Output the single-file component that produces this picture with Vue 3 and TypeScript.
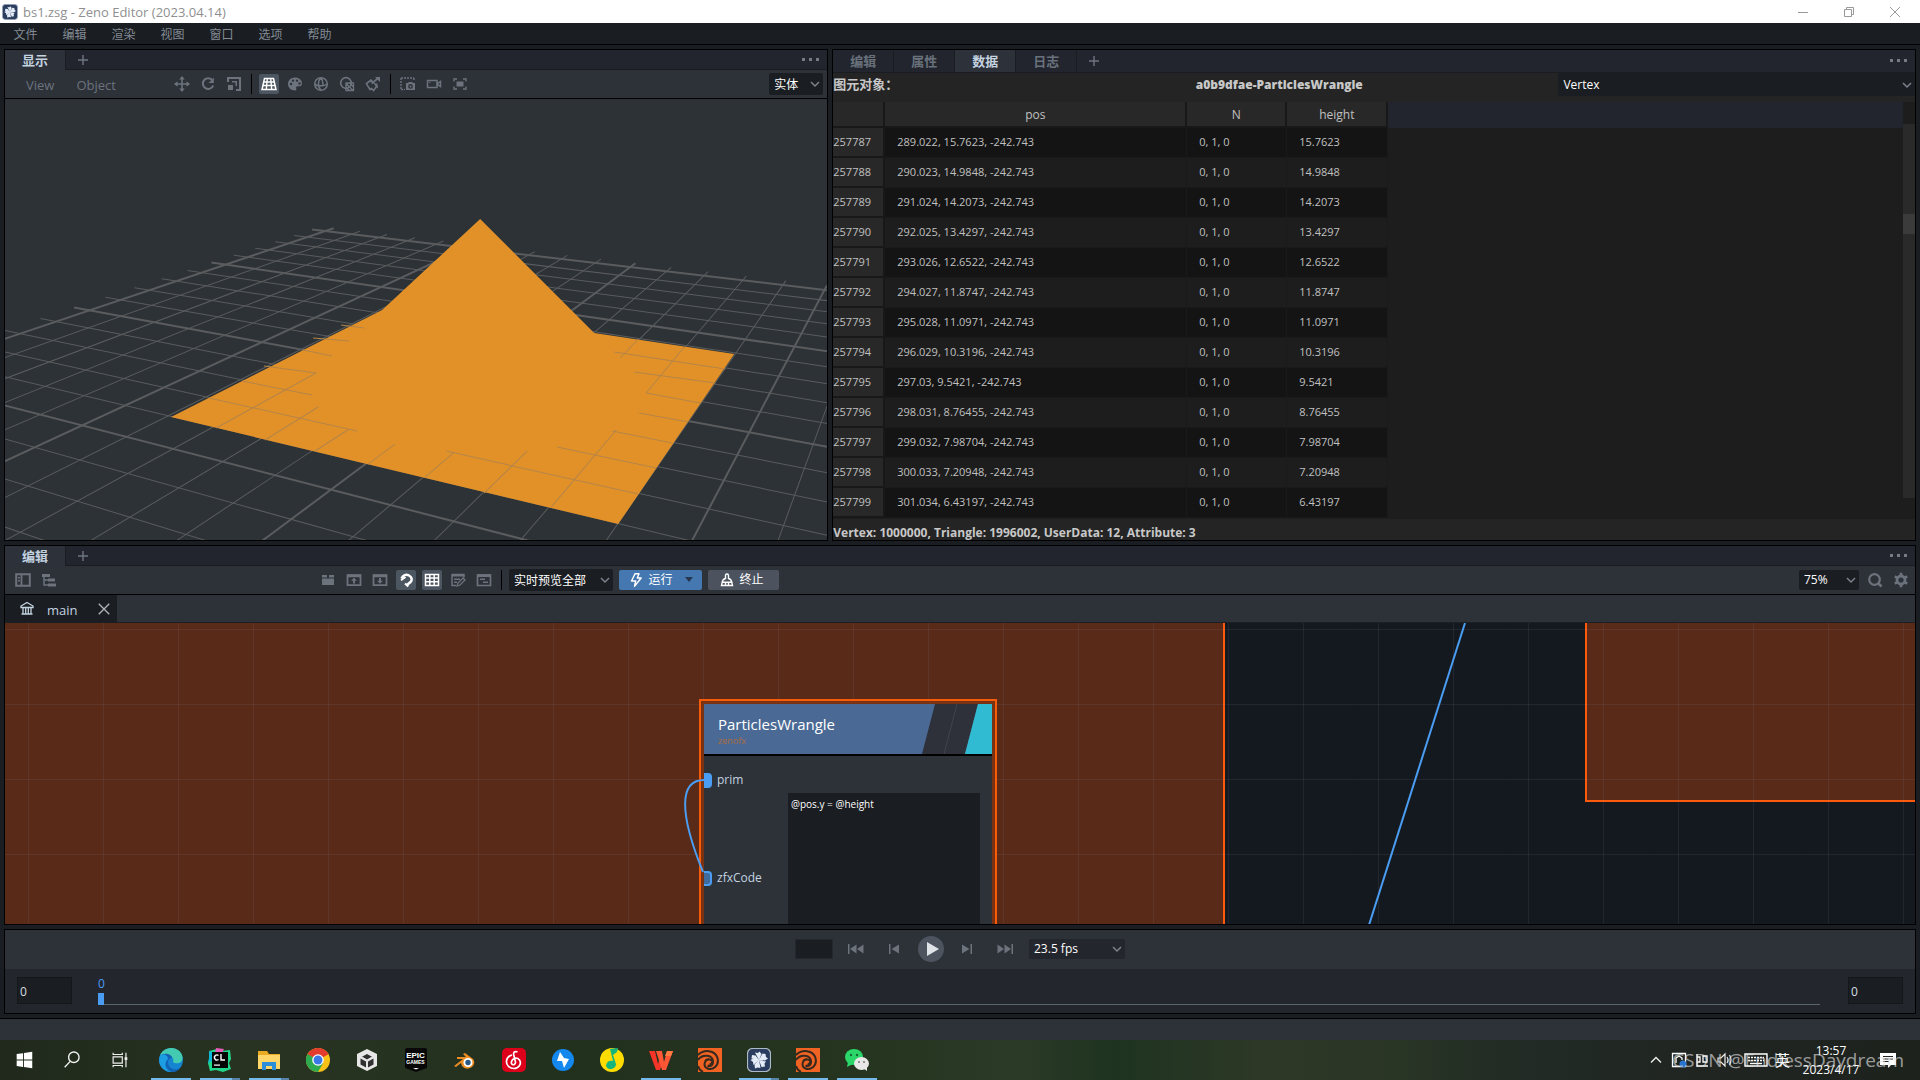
<script setup lang="ts">
import { ref } from 'vue'

interface Pt { x: number; y: number }
interface Line { a: Pt; b: Pt; major: boolean }
interface ToolIcon { name: string; label: string; active?: boolean }
interface App { name: string; icon: string; state?: 'open' | 'multi' }

const menus = ['文件', '编辑', '渲染', '视图', '窗口', '选项', '帮助']
const dataTabs = ['编辑', '属性', '数据', '日志']

const icons: Record<string, string> = {
  move: '<path d="M8 1v14M1 8h14" stroke="currentColor" stroke-width="1.6"/><path d="M8 0 5.200 3.500h5.600zM8 16l-2.800-3.500h5.600zM0 8l3.500-2.800v5.600zM16 8l-3.500-2.800v5.600z" fill="currentColor"/>',
  rotate: '<path d="M12.500 4.200A5.400 5.400 0 1 0 13.300 9.500" fill="none" stroke="currentColor" stroke-width="2"/><path d="M13.800 1.500v5.500H8.500z" fill="currentColor"/>',
  scale: '<path d="M2 6V2h12v12h-4" fill="none" stroke="currentColor" stroke-width="2"/><path d="M2 9h5v5H2zM6 5h5v5H9.500V6.500H6z" fill="currentColor"/>',
  floor: '<path d="M3.500 2.500h9l2.500 11H1z" fill="none" stroke="currentColor" stroke-width="1.5"/><path d="M2.800 6h10.500M2 9.500h12M6.300 2.500l-1 11M9.700 2.500l1 11" stroke="currentColor" stroke-width="1.4"/>',
  palette: '<path fill-rule="evenodd" fill="currentColor" d="M8 1.500C4 1.500 1 4.300 1 8s3 6.500 7 6.500c1.500 0 1.700-1 1.200-1.900-.6-1.200.2-2.400 1.500-2.400h2C14.200 10.200 15 9 15 7.500 15 4 12 1.500 8 1.500zM4 9.200a1.200 1.200 0 1 1 0-2.400 1.200 1.200 0 0 1 0 2.400zM6 5.800a1.200 1.200 0 1 1 0-2.400 1.200 1.200 0 0 1 0 2.400zm4 0a1.200 1.200 0 1 1 0-2.400 1.200 1.200 0 0 1 0 2.400zm2.500 2.900a1.200 1.200 0 1 1 0-2.400 1.200 1.200 0 0 1 0 2.400z"/>',
  globe: '<g fill="none" stroke="currentColor" stroke-width="1.6"><circle cx="8" cy="8" r="6.300"/><path d="M8 1.700C4.500 5 4.500 11 8 14.300M8 1.700c1.700 2 2 4 2 7M1.700 8c2 2.500 9.500 2.500 12.600 0"/></g>',
  shade: '<circle cx="7" cy="7" r="5.300" fill="none" stroke="currentColor" stroke-width="1.700"/><path d="M7 7h7.500v7.500H7zM7.500 8l6.500 6.500M10.500 7l4 4M7 11l3.500 3.500" fill="none" stroke="currentColor" stroke-width="1.300"/>',
  light: '<path d="M1.500 7.500 6 4l6 6-3.500 4.500-2-2-1.500 1-1.500-2.500-1-1.300zM6.500 7.500 13.500 2" fill="none" stroke="currentColor" stroke-width="1.600"/><path d="M10 1h5v5zM12 6.500l1 6-3-2.500z" fill="currentColor"/>',
  snapshot: '<path d="M1 2h13M1 2v12M1 13.500h4M14 2v3" fill="none" stroke="currentColor" stroke-width="1.400" stroke-dasharray="2 1"/><path fill-rule="evenodd" fill="currentColor" d="M6 7h2l1-1h3l1 1h2v7H6zm4.500 1a2.400 2.400 0 1 0 0 4.800 2.400 2.400 0 0 0 0-4.800z"/><circle cx="10.500" cy="10.400" r="1" fill="currentColor"/>',
  video: '<path d="M1.500 4.500h9.500v7H1.500zM11 8l3.500-2.500v5z" fill="none" stroke="currentColor" stroke-width="1.500"/><path d="M3 6.300h1.500" stroke="currentColor"/>',
  focus: '<path d="M2 5.500V3h3M11 3h3v2.500M14 10.500V13h-3M5 13H2v-2.500" fill="none" stroke="currentColor" stroke-width="1.400"/><path d="M4.500 5.500h7v5h-7z" fill="currentColor"/>',
  sidebar: '<path d="M1.200 2.200h13.600v11.600H1.200z" fill="none" stroke="currentColor" stroke-width="2"/><path d="M6.500 2v12" stroke="currentColor" stroke-width="1.800"/><path d="M3 5h2v1.500H3zM3 8h2v1.500H3z" fill="currentColor"/>',
  tree: '<path d="M1 2h8v3H1zM7 6.500h7v3H7zM7 11.500h8v3H7z" fill="currentColor"/><path d="M3 5v8h4M3 8h4" fill="none" stroke="currentColor" stroke-width="1.500"/>',
  folder: '<path d="M2 3h5v2.500H2zM9 3h5v2.500H9zM2 6.500h12V13H2z" fill="currentColor"/>',
  up: '<path d="M1.500 3.200h13v10h-13z" fill="none" stroke="currentColor" stroke-width="1.800"/><path d="M1 2.500h14v2.700H1zM8 5.800l3 3H9V11.500H7V8.800H5z" fill="currentColor"/>',
  down: '<path d="M1.500 3.200h13v10h-13z" fill="none" stroke="currentColor" stroke-width="1.800"/><path d="M1 2.500h14v2.700H1zM8 11.800l3-3H9V6H7v2.800H5z" fill="currentColor"/>',
  magnet: '<path d="M3.500 6.500C5 3 8 1.800 11 3.500s3.500 4.500 1.500 6.500L9 13" fill="none" stroke="currentColor" stroke-width="2.500"/><path d="M3 8.200 7.500 5M7 11.500l3.300 3" stroke="currentColor" stroke-width="2"/>',
  grid: '<path d="M1.500 2.500h13v11h-13zM1.500 6h13M1.500 9.700h13M5.800 2.500v11M10.200 2.500v11" fill="none" stroke="currentColor" stroke-width="1.500"/>',
  note: '<path d="M6 13.500H2v-11h12v3" fill="none" stroke="currentColor" stroke-width="1.500"/><path d="M2 2h12v2.500H2zM4 6.500h6V8H4zM4 9.500h3V11H4z" fill="currentColor"/><path d="m7 14 1-3 5-5 2 2-5 5z" fill="none" stroke="currentColor" stroke-width="1.300"/>',
  panel: '<path d="M1.500 3h13v10.500h-13z" fill="none" stroke="currentColor" stroke-width="1.700"/><path d="M1 2.300h14V5H1zM4 6.500h5V8H4zM7 9.500h5V11H7z" fill="currentColor"/>',
  bolt: '<path d="M7 1.800h4L9.300 6h3.900L6.500 14.200 7.700 9H3.500z" fill="none" stroke="currentColor" stroke-width="1.400" stroke-linejoin="round"/>',
  broom: '<path d="M6.500 6.500V3.500a1.500 1.500 0 0 1 3 0v3c2 .6 3 2 3.200 3.500l.8 3.500h-11l.8-3.500C3.500 8.500 4.500 7.100 6.500 6.500zM3.500 10.200h9M6.500 11v2.500M9.500 11v2.500" fill="none" stroke="currentColor" stroke-width="1.400"/>',
  search: '<circle cx="7.500" cy="7.500" r="5.300" fill="none" stroke="currentColor" stroke-width="2.200"/><path d="m11 11 3.500 3.500" stroke="currentColor" stroke-width="2.500"/>',
  gear: '<circle cx="8" cy="8" r="4" fill="none" stroke="currentColor" stroke-width="2.800"/><path d="M8 .8v3M8 12.200v3M1.800 4.400l2.500 1.500M11.700 10.100l2.500 1.500M1.800 11.600l2.500-1.500M11.700 5.900l2.500-1.500" stroke="currentColor" stroke-width="2.800"/>',
  bank: '<path d="m8 1.500 6 3.500v1.500H2V5zM2.500 13h11M4 6.500V13M6.700 6.500V13M9.300 6.500V13M12 6.500V13" fill="none" stroke="currentColor" stroke-width="1.300"/>',
  close: '<path d="m1 1 14 14M15 1 1 15" stroke="currentColor" stroke-width="1.800"/>',
  plus: '<path d="M8 3v10M3 8h10" stroke="currentColor" stroke-width="1.400"/>',
  chevron: '<path d="m4 6 4 4 4-4" fill="none" stroke="#7b828c" stroke-width="1.500"/>',
  dots: '<path d="M0 6h3v3H0zM7 6h3v3H7zM14 6h3v3h-3z" fill="currentColor"/>',
  first: '<path d="M0 3h1.500v10H0zM8.500 3.500v9L2 8zM15.500 3.500v9L9 8z" fill="currentColor"/>',
  prev: '<path d="M3 3h1.500v10H3zM13 3.500v9L5.500 8z" fill="currentColor"/>',
  next: '<path d="M11.500 3H13v10h-1.500zM3 3.500v9L10.500 8z" fill="currentColor"/>',
  last: '<path d="M14.500 3H16v10h-1.500zM7.500 3.500v9L14 8zM.5 3.500v9L7 8z" fill="currentColor"/>',
  zeno: '<rect x=".5" y=".5" width="23" height="23" rx="5" fill="#2b3d5e" stroke="#aeb9c8" stroke-width="1.200"/><g fill="#e3ebf6"><path d="M12 12 8 4.500l3 .5 1.500-1.500 2 2.500zM12 12l3.500-6.500 3 .5.500 3 2 1.500-3 2zM12 12l7 1.500-1.500 2 .5 3-3.500.500zM12 12l1.500 8-3-.5-2.500 1-.5-4zM12 12l-5.500 5-.5-3-2.500-2 3-1.500zM12 12 4.500 10.500 5 7l3.500.5z"/></g>',
  win: '<path fill="#fff" d="M4 5.500 11 4.500v7H4zM12 4.300 21 3v8.500h-9zM4 12.500h7v7l-7-1zM12 12.500h9V21l-9-1.300z"/>',
  find: '<g fill="none" stroke="#f2f2f2" stroke-width="1.500"><circle cx="14" cy="9" r="5.700"/><path d="m10 13.500-6 6.500"/></g>',
  tasks: '<g fill="none" stroke="#eee" stroke-width="1.300"><path d="M4.500 8.500h10v7h-10zM4.500 4v2h10V4M4.500 20v-2h10v2M18.500 4v16"/></g><path d="M17 9h3v3h-3z" fill="#eee"/>',
  edge: '<circle cx="12" cy="12" r="12" fill="#1685d1"/><path d="M1 8C4-2 19-3 23 7c2 6-2 9-7 8-3-.5-2-2-1.500-3C14 7 5 4 1 8z" fill="#42cbb0"/><path d="M1 8C5 4 13 6 13 10c-5 0-6 8 1 11 2 1 6 0 8-2-4 7-15 7-19 0C0 15 0 11 1 8z" fill="#1263b4"/><path d="M9 11c-5 5-2 11 4 13C3 24-2 15 1 8c3-3 8-1 8 3z" fill="#1d9de2"/>',
  clion: '<path d="m1 3 8-2 5 2 8-1 1 9-2 4 2 6-8 3-7-2-6 1-2-8 2-6z" fill="#21d789"/><path d="m1 3 6 2-3 8-4 2 1-5z" fill="#0bbad6"/><path d="m8 0 8 1-2 4H7z" fill="#e95bb9"/><path d="M4 4h16v16H4z" fill="#050505"/><path d="M10.500 7.500A2.500 2.500 0 1 0 10.500 11.500M13 6v6h4" fill="none" stroke="#fff" stroke-width="1.400"/><path d="M6 16.500h6v1.200H6z" fill="#fff"/>',
  files: '<path d="M1 3h9l2 3h11v15H1z" fill="#e9ac22"/><path d="M1 7h22v14H1z" fill="#ffd667"/><path d="M5 14h14v8h-4v-4H9v4H5z" fill="#2c8ed8"/>',
  chrome: '<circle cx="12" cy="12" r="12" fill="#fbc116"/><path d="M12 12 1.600 6a12 12 0 0 1 20.800 0z" fill="#e33b2e"/><path d="M12 12 1.600 6A12 12 0 0 0 12 24l5.200-9z" fill="#2da94f"/><path d="M1.600 6h20.800L12 12z" fill="#e33b2e"/><circle cx="12" cy="12" r="5.800" fill="#fff"/><circle cx="12" cy="12" r="4.500" fill="#3b78e7"/>',
  unity: '<path d="m12 1 10 5v12l-10 5-10-5V6z" fill="#e7e7e7"/><path d="m12 6 5 2.800-5 2.900-5-2.900zM5.500 10.500l5.500 3v6l-5.500-3zM18.500 10.500l-5.500 3v6l5.500-3z" fill="#303030"/><path d="m12 12 0 7M12 12 6 8.500M12 12l6-3.500" stroke="#ddd"/>',
  epic: '<path d="M1 2q0-2 2-2h18q2 0 2 2v18l-11 4-11-4z" fill="#080808"/><path d="m9 20 3 1.500 3-1.500z" fill="#eee"/>',
  blender: '<path d="m1 18 9-7H4V9h9l-3-3 2-1 8 6q3 4-1 8-6 4-10-1l-1-3-5 4z" fill="#ed8d24"/><circle cx="15" cy="14.500" r="4.500" fill="#fff"/><circle cx="15" cy="14.500" r="2.700" fill="#265787"/>',
  netease: '<rect width="24" height="24" rx="5" fill="#dd001b"/><path d="M15.500 4C12 2.500 11 5 12 8l1.500 6c0 4-5 3.500-4-.5C10.500 10 15 9 17.500 12c2.500 4-1 8.500-5.500 8.500S4 17 4.500 13 8 7.500 10 7" fill="none" stroke="#fff" stroke-width="1.700"/>',
  thunder: '<circle cx="12" cy="12" r="11" fill="#1488ee"/><path d="M9 4 6 13l5 0 2 7 5-9-5-1z" fill="#fff"/>',
  music: '<circle cx="12" cy="12" r="12" fill="#ffdc00"/><path d="M10 1l8-1-1 4-4 3 3 9c0 6-10 7-10 1 1-4 4-5 7-4z" fill="#16b57b"/>',
  wps: '<path d="M0 3h6l3 13 2-7 3 5-3 8H7z" fill="#f43527"/><path d="M7 3h6l2 11 3-11h6l-7 19h-4z" fill="#ff5636"/><path d="m16 8 2-5h6l-2 5z" fill="#ff7b42"/>',
  houdini: '<path d="M0 0h24v24H0z" fill="#f16322"/><path d="M0 7c6-6 17-5 19.500 3 2 8-5 12.500-10 10.500s-3-10 2-9 2 5 0 5M0 12c3-5 12-6 14.500-1 2 6-2 8-5 6.500M0 18q1 4 5 6" fill="none" stroke="#36291e" stroke-width="2"/>',
  wechat: '<ellipse cx="9" cy="9" rx="9" ry="8" fill="#2bd769"/><path d="m3 14-1 5 6-3z" fill="#2bd769"/><ellipse cx="16.500" cy="15.500" rx="7.500" ry="6.500" fill="#e8e8e8"/><path d="m18 20 4 3v-5z" fill="#e8e8e8"/><g fill="#146b35"><circle cx="6" cy="7" r="1.200"/><circle cx="12" cy="7" r="1.200"/></g><g fill="#777"><circle cx="14" cy="14" r="1"/><circle cx="19" cy="14" r="1"/></g>',
}

const transformTools: ToolIcon[] = [
  { name: 'move', label: '移动' }, { name: 'rotate', label: '旋转' }, { name: 'scale', label: '缩放' },
]
const shadingTools: ToolIcon[] = [
  { name: 'floor', label: '网格', active: true }, { name: 'palette', label: '材质' }, { name: 'globe', label: '线框' },
  { name: 'shade', label: '平滑' }, { name: 'light', label: '灯光' },
]
const cameraTools: ToolIcon[] = [
  { name: 'snapshot', label: '截图' }, { name: 'video', label: '录像' }, { name: 'focus', label: '聚焦' },
]
const graphTools: ToolIcon[] = [
  { name: 'folder', label: '打开' }, { name: 'up', label: '上级' }, { name: 'down', label: '下级' },
  { name: 'magnet', label: '吸附', active: true }, { name: 'grid', label: '网格', active: true },
  { name: 'note', label: '注释' }, { name: 'panel', label: '面板' },
]

const rows: [number, string, string][] = [
  [257787, '289.022', '15.7623'],
  [257788, '290.023', '14.9848'],
  [257789, '291.024', '14.2073'],
  [257790, '292.025', '13.4297'],
  [257791, '293.026', '12.6522'],
  [257792, '294.027', '11.8747'],
  [257793, '295.028', '11.0971'],
  [257794, '296.029', '10.3196'],
  [257795, '297.03', '9.5421'],
  [257796, '298.031', '8.76455'],
  [257797, '299.032', '7.98704'],
  [257798, '300.033', '7.20948'],
  [257799, '301.034', '6.43197'],
]

const apps: App[] = [
  { name: 'Edge', icon: 'edge', state: 'open' },
  { name: 'CLion', icon: 'clion', state: 'multi' },
  { name: 'Explorer', icon: 'files', state: 'multi' },
  { name: 'Chrome', icon: 'chrome' },
  { name: 'Unity', icon: 'unity' },
  { name: 'Epic Games', icon: 'epic' },
  { name: 'Blender', icon: 'blender' },
  { name: 'NetEase Music', icon: 'netease' },
  { name: 'Thunder', icon: 'thunder' },
  { name: 'QQ Music', icon: 'music' },
  { name: 'WPS', icon: 'wps', state: 'open' },
  { name: 'Houdini', icon: 'houdini' },
  { name: 'Zeno', icon: 'zeno', state: 'multi' },
  { name: 'Houdini', icon: 'houdini', state: 'open' },
  { name: 'WeChat', icon: 'wechat', state: 'open' },
]

// Perspective mapping of the ground plane into viewport coordinates.
const G = -0.2144
const H = -0.2676
function project(u: number, v: number): Pt {
  const s = u / 15
  const t = v / 10
  const w = 1 + G * s + H * t
  return {
    x: (609.2 * s - 490.2 * t + 614) / w / 1.8892 - 5,
    y: (53.6 * s + 67.8 * t + 396.5) / w / 3,
  }
}

const floor: Line[] = []
for (let i = 0; i <= 28; i++) {
  const vMax = ((0.94 + G * (i / 15)) / -H) * 10
  const uMax = ((0.94 + H * (i / 10)) / -G) * 15
  if (i <= 20) floor.push({ a: project(i, -0.5), b: project(i, vMax), major: i % 5 === 0 })
  floor.push({ a: project(-0.5, i), b: project(Math.min(uMax, 24), i), major: i % 5 === 0 })
}

// Pieces of the floor grid that show above the surface near its rim.
const rim: [number, number, number, number][] = [
  [341, 325, 364, 328], [313, 338, 349, 341], [303, 350, 332, 356], [264, 366, 316, 373], [316, 373, 216, 428],
  [242, 381, 312, 395], [209, 398, 357, 431], [318, 407, 265, 440], [349, 429, 315, 451], [395, 444, 368, 464],
  [454, 452, 425, 477], [446, 451, 638, 494], [527, 451, 484, 493], [616, 430, 551, 507], [612, 431, 672, 443],
  [557, 447, 656, 468], [639, 413, 688, 422], [646, 393, 700, 403], [646, 393, 684, 347], [634, 372, 715, 383],
  [614, 352, 725, 369], [620, 358, 638, 339],
]

const display = ref('实体')
const element = ref('Vertex')
const preview = ref('实时预览全部')
const zoomLevel = ref('75%')
const fps = ref('23.5 fps')
const frame = ref(0)
const startFrame = ref('0')
const endFrame = ref('0')
const currentFrame = ref('')
const code = ref('@pos.y = @height')
</script>

<template>
  <div class="app">
    <header class="titlebar">
      <svg class="logo" viewBox="0 0 24 24" v-html="icons.zeno" />
      <span>bs1.zsg - Zeno Editor (2023.04.14)</span>
      <div class="winbtns">
        <button aria-label="Minimize"><svg viewBox="0 0 12 12"><path d="M1 6.500h10" stroke="#999" /></svg></button>
        <button aria-label="Restore"><svg viewBox="0 0 12 12"><path d="M1.500 3.500h7v7h-7zM3.500 3.500v-2h7v7h-2" fill="none" stroke="#999" /></svg></button>
        <button aria-label="Close"><svg viewBox="0 0 12 12"><path d="m1 1 10 10M11 1 1 11" stroke="#999" /></svg></button>
      </div>
    </header>
    <nav class="menubar">
      <button v-for="m in menus" :key="m">{{ m }}</button>
    </nav>

    <main class="workspace">
      <div class="upper">
        <section class="panel view3d">
          <div class="tabs">
            <button class="tab on wide">显示</button>
            <button class="add" aria-label="添加"><svg class="ic" viewBox="0 0 16 16" v-html="icons.plus" /></button>
            <button class="more" aria-label="更多"><svg viewBox="0 0 17 16" v-html="icons.dots" /></button>
          </div>
          <div class="toolbar">
            <div class="words"><button>View</button><button>Object</button></div>
            <div class="tools">
              <button v-for="t in transformTools" :key="t.name" class="tool" :aria-label="t.label"><svg class="ic" viewBox="0 0 16 16" v-html="icons[t.name]" /></button>
              <i class="sep" />
              <button v-for="t in shadingTools" :key="t.name" class="tool" :class="{ active: t.active }" :aria-label="t.label"><svg class="ic" viewBox="0 0 16 16" v-html="icons[t.name]" /></button>
              <i class="sep" />
              <button v-for="t in cameraTools" :key="t.name" class="tool" :aria-label="t.label"><svg class="ic" viewBox="0 0 16 16" v-html="icons[t.name]" /></button>
            </div>
            <label class="combo mode"><select v-model="display" aria-label="显示模式"><option>实体</option></select><svg viewBox="0 0 16 16" v-html="icons.chevron" /></label>
          </div>
          <div class="viewport">
            <svg viewBox="0 0 822 441" preserveAspectRatio="xMidYMid slice">
              <line v-for="(l, i) in floor" :key="i" :x1="l.a.x" :y1="l.a.y" :x2="l.b.x" :y2="l.b.y" stroke="#5a5c5e" :stroke-width="l.major ? 2 : 1" />
              <path d="M166 318 377 211 475 120 589 234 729 255 613 425z" fill="#e29128" />
              <line v-for="(r, i) in rim" :key="'r' + i" :x1="r[0]" :y1="r[1]" :x2="r[2]" :y2="r[3]" stroke="#b58548" stroke-width="1" transform="translate(-5 -99)" />
            </svg>
          </div>
        </section>

        <section class="panel data">
          <div class="tabs tall">
            <button v-for="t in dataTabs" :key="t" class="tab" :class="{ on: t === '数据' }">{{ t }}</button>
            <button class="add" aria-label="添加"><svg class="ic" viewBox="0 0 16 16" v-html="icons.plus" /></button>
            <button class="more" aria-label="更多"><svg viewBox="0 0 17 16" v-html="icons.dots" /></button>
          </div>
          <div class="object">
            <label for="element">图元对象：</label>
            <strong>a0b9dfae-ParticlesWrangle</strong>
            <div class="combo vertex"><select id="element" v-model="element"><option>Vertex</option></select><svg viewBox="0 0 16 16" v-html="icons.chevron" /></div>
          </div>
          <div class="sheet">
            <table>
              <colgroup><col class="c0"><col class="c1"><col class="c2"><col class="c3"><col></colgroup>
              <thead><tr><th /><th>pos</th><th>N</th><th>height</th><th class="rest" /></tr></thead>
              <tbody>
                <tr v-for="r in rows" :key="r[0]">
                  <th scope="row">{{ r[0] }}</th>
                  <td>{{ r[1] }}, {{ r[2] }}, -242.743</td>
                  <td>0, 1, 0</td>
                  <td>{{ r[2] }}</td>
                  <td class="rest" />
                </tr>
              </tbody>
            </table>
            <div class="scroll"><i /></div>
          </div>
          <div class="counts">Vertex: 1000000, Triangle: 1996002, UserData: 12, Attribute: 3</div>
        </section>
      </div>

      <section class="panel graph">
        <div class="tabs">
          <button class="tab on wide">编辑</button>
          <button class="add" aria-label="添加"><svg class="ic" viewBox="0 0 16 16" v-html="icons.plus" /></button>
          <button class="more" aria-label="更多"><svg viewBox="0 0 17 16" v-html="icons.dots" /></button>
        </div>
        <div class="toolbar">
          <div class="lefttools">
            <button class="tool" aria-label="侧栏"><svg class="ic" viewBox="0 0 16 16" v-html="icons.sidebar" /></button>
            <button class="tool" aria-label="子图"><svg class="ic" viewBox="0 0 16 16" v-html="icons.tree" /></button>
          </div>
          <div class="tools">
            <button v-for="t in graphTools" :key="t.name" class="tool" :class="{ active: t.active }" :aria-label="t.label"><svg class="ic" viewBox="0 0 16 16" v-html="icons[t.name]" /></button>
            <i class="sep" />
          </div>
          <label class="combo preview"><select v-model="preview" aria-label="预览"><option>实时预览全部</option></select><svg viewBox="0 0 16 16" v-html="icons.chevron" /></label>
          <button class="run"><svg class="ic" viewBox="0 0 16 16" v-html="icons.bolt" />运行<svg class="tri" viewBox="0 0 8 6"><path d="M0 0h8L4 5z" fill="#26384f" /></svg></button>
          <button class="stop"><svg class="ic" viewBox="0 0 16 16" v-html="icons.broom" />终止</button>
          <div class="righttools">
            <label class="combo zoom"><select v-model="zoomLevel" aria-label="缩放"><option>75%</option></select><svg viewBox="0 0 16 16" v-html="icons.chevron" /></label>
            <button class="tool" aria-label="搜索"><svg class="ic" viewBox="0 0 16 16" v-html="icons.search" /></button>
            <button class="tool" aria-label="设置"><svg class="ic" viewBox="0 0 16 16" v-html="icons.gear" /></button>
          </div>
        </div>
        <div class="files">
          <div class="file">
            <svg class="ic" viewBox="0 0 16 16" v-html="icons.bank" /><span>main</span>
            <button aria-label="关闭"><svg viewBox="0 0 16 16" v-html="icons.close" /></button>
          </div>
        </div>
        <div class="canvas">
          <div class="group first" />
          <div class="group second" />
          <div class="gridlines" />
          <svg class="wires"><path d="M1460 0 1364 302" fill="none" stroke="#4a9df2" stroke-width="2" /></svg>
          <div class="node">
            <div class="head">
              <svg viewBox="0 0 70 50"><path d="M13 0h43L43 50H0z" fill="#2e313a" /><path d="M35 0 22 50" stroke="#41444c" /><path d="M56 0h14v50H43z" fill="#31bbd3" /></svg>
              <b>ParticlesWrangle</b><small>zenofx</small>
            </div>
            <div class="port prim"><i />prim</div>
            <div class="port zfx"><i /><label for="zfx">zfxCode</label></div>
            <textarea id="zfx" v-model="code" spellcheck="false" />
          </div>
          <svg class="wires"><path d="M699 157C674 157 674 190 698 249" fill="none" stroke="#4a9df2" stroke-width="2" /></svg>
        </div>
      </section>

      <section class="panel timeline">
        <div class="player">
          <input v-model="currentFrame" class="cur" aria-label="当前帧">
          <button class="step" aria-label="首帧"><svg class="ic" viewBox="0 0 16 16" v-html="icons.first" /></button>
          <button class="step" aria-label="上一帧"><svg class="ic" viewBox="0 0 16 16" v-html="icons.prev" /></button>
          <button class="play" aria-label="播放"><svg viewBox="0 0 26 26"><path d="M9 6v14l12-7z" fill="#e0e4e9" /></svg></button>
          <button class="step" aria-label="下一帧"><svg class="ic" viewBox="0 0 16 16" v-html="icons.next" /></button>
          <button class="step" aria-label="末帧"><svg class="ic" viewBox="0 0 16 16" v-html="icons.last" /></button>
          <label class="combo fps"><select v-model="fps" aria-label="帧率"><option>23.5 fps</option></select><svg viewBox="0 0 16 16" v-html="icons.chevron" /></label>
        </div>
        <div class="range">
          <input v-model="startFrame" class="num" aria-label="起始帧">
          <div class="slide">
            <label for="frame">{{ frame }}</label>
            <input id="frame" v-model.number="frame" type="range" min="0" max="100">
          </div>
          <input v-model="endFrame" class="num" aria-label="结束帧">
        </div>
      </section>
    </main>
    <div class="statusbar" />

    <footer class="taskbar">
      <button class="sys" aria-label="开始"><svg viewBox="0 0 24 24" v-html="icons.win" /></button>
      <button class="sys" aria-label="搜索"><svg viewBox="0 0 24 24" v-html="icons.find" /></button>
      <button class="sys" aria-label="任务视图"><svg viewBox="0 0 24 24" v-html="icons.tasks" /></button>
      <div class="apps">
        <button v-for="(a, i) in apps" :key="i" :class="a.state" :aria-label="a.name">
          <svg viewBox="0 0 24 24" v-html="icons[a.icon]" />
          <span v-if="a.icon === 'epic'" class="epic"><b>EPIC</b><small>GAMES</small></span>
        </button>
      </div>
      <div class="tray">
        <svg viewBox="0 0 16 16"><path d="m3 10.500 5-5 5 5" fill="none" stroke="#eee" stroke-width="1.400" /></svg>
        <svg viewBox="0 0 16 16"><path d="M1.500 1.500h13v13h-13zM5 11V6l3-2 3 2v2" fill="none" stroke="#fff" stroke-width="1.300" /><circle cx="12" cy="12" r="3.500" fill="#2875cf" /></svg>
        <svg viewBox="0 0 16 16"><path d="M3 2v12h11M3 5h3v5H3M9 4h4v6H9z" fill="none" stroke="#fff" stroke-width="1.300" /></svg>
        <svg viewBox="0 0 16 16"><path d="M1 6h3l4-4v12l-4-4H1zM10 5q2 3 0 6M12.500 3q3 5 0 10" fill="none" stroke="#eee" stroke-width="1.200" /></svg>
        <svg class="kbd" viewBox="0 0 24 16"><path d="M1 2h22v12H1z" fill="none" stroke="#fff" stroke-width="1.400" /><path d="M4 5.500h16M4 8.500h16" stroke="#fff" stroke-width="1.400" stroke-dasharray="2 1" /><path d="M6 11.500h12" stroke="#fff" stroke-width="1.400" /></svg>
        <span class="ime">英</span>
        <div class="clock"><span>13:57</span><span>2023/4/17</span></div>
        <svg class="notice" viewBox="0 0 16 16"><path d="M0 1h16v12h-5l-3 3v-3H0z" fill="#fff" /><path d="M3 4.500h10M3 7h10M3 9.500h6" stroke="#222" /></svg>
      </div>
      <div class="watermark">CSDN @EndlessDaydream</div>
    </footer>
  </div>
</template>

<style>
body { margin: 0; background: #1a1d21; }
</style>

<style scoped>
* { box-sizing: border-box; }
.app { min-height: 100vh; display: flex; flex-direction: column; background: #1a1d21; color: #c3cdd8; font: 12px/16px "Open Sans", "Noto Sans CJK SC", sans-serif; }
button { border: 0; padding: 0; margin: 0; background: none; color: inherit; font: inherit; display: flex; align-items: center; justify-content: center; }
input, select, textarea { font: inherit; color: #fff; border: 0; outline: 0; border-radius: 0; margin: 0; }
svg { display: block; flex: none; }
.ic { width: 16px; height: 16px; }

.titlebar { height: 23px; background: #fff; color: #8f8f8f; display: flex; align-items: center; gap: 5px; padding-left: 2px; font-size: 13px; }
.logo { width: 16px; height: 16px; }
.winbtns { display: flex; margin-left: auto; padding-right: 2px; }
.winbtns button { width: 46px; height: 20px; }
.winbtns svg { width: 12px; height: 12px; }
.menubar { height: 22px; display: flex; border-bottom: 1px solid #000; padding: 2px 1px 0; color: #838b95; }
.menubar button { width: 49px; }

.workspace { flex: 1; display: flex; flex-direction: column; gap: 4px; padding: 4px; }
.upper { display: flex; gap: 4px; }
.panel { border: 1px solid #000; display: flex; flex-direction: column; min-width: 0; }
.view3d { flex: 824 1 0; }
.data { flex: 1084 1 0; background: #242424; }

.tabs { height: 20px; display: flex; background: #22252d; border-bottom: 1px solid #191c20; color: #69717c; font-size: 13px; flex: none; }
.tabs.tall { height: 23px; }
.tab { width: 61px; border-right: 1px solid #191c20; font-weight: 700; }
.tab.wide { height: 20px; }
.tab.on { background: #2d3139; color: #c3d3e0; }
.add { width: 34px; color: #6f7680; }
.more { margin-left: auto; width: 34px; color: #767c85; }
.more svg { width: 17px; height: 16px; }

.toolbar { height: 29px; background: #2d3138; border-bottom: 1px solid #000; display: flex; align-items: center; color: #6c737d; flex: none; }
.words { display: flex; gap: 22px; padding: 2px 0 0 21px; width: 167px; font-size: 13px; }
.tools, .lefttools, .righttools { display: flex; align-items: center; gap: 6px; }
.tool { width: 20px; height: 20px; border-radius: 2px; flex: none; }
.tool.active { background: #4c5661; color: #fff; }
.sep { width: 1px; height: 20px; background: #000; margin: 0 1px; flex: none; }
.lefttools { padding-left: 8px; width: 313px; }
.righttools { margin-left: auto; padding-right: 4px; }
.combo { position: relative; display: flex; align-items: center; }
.combo select { appearance: none; width: 100%; height: 100%; padding: 0 5px; background: #1a1d21; border-radius: 2px; }
.combo svg { position: absolute; right: 0; width: 16px; height: 16px; pointer-events: none; }
.mode { width: 54px; height: 22px; margin: 0 4px 0 auto; }
.mode select, .preview select { padding-top: 2px; }
.viewport { flex: 1; position: relative; background: #2d3236; overflow: hidden; }
.viewport svg { position: absolute; width: 100%; height: 100%; }

.object { display: grid; grid-template-columns: 1fr 1fr 1fr; column-gap: 6px; height: 29px; color: #c8c8c8; font-weight: 700; }
.object label { font-size: 13px; line-height: 22px; }
.object strong { line-height: 24px; }
.vertex { height: 23px; font-weight: 400; }
.sheet { display: flex; background: #1d1d1d; padding-bottom: 1px; }
table { flex: 1; border-spacing: 0; table-layout: fixed; width: 100%; font-size: 11px; color: #c0c0c0; }
.c0 { width: 52px; } .c1 { width: 302px; } .c2 { width: 100px; } .c3 { width: 101px; }
th { font-weight: 400; background: #282828; border-right: 2px solid #181818; border-bottom: 2px solid #181818; padding: 0; }
thead th { height: 26px; font-size: 12px; padding-top: 2px; }
tbody th { text-align: left; height: 30px; }
td { height: 30px; padding: 0 0 2px 12px; background: #1d1d1d; border-right: 1px solid #1a1a1a; border-bottom: 1px solid #191919; }
tbody tr:nth-child(odd) td { background: #141414; }
thead th.rest { background: #22252e; border: 0; }
tbody tr td.rest { background: #1d1d1d; border: 0; }
.scroll { width: 12px; background: #2a2a2a; border-top: 22px solid #1d1d1d; border-bottom: 20px solid #1d1d1d; padding-top: 90px; }
.scroll i { display: block; height: 20px; background: #3b3b3b; }
.counts { height: 21px; line-height: 28px; overflow: hidden; font-weight: 700; color: #c8c8c8; }

.graph { flex: 1; }
.preview { width: 104px; height: 22px; margin-left: 6px; }
.run, .stop { height: 20px; border-radius: 2px; color: #fff; gap: 4px; }
.run { width: 83px; background: #4578b0; margin-left: 6px; }
.run .tri { width: 8px; height: 6px; margin-left: 8px; }
.stop { width: 71px; background: #4c535f; margin-left: 6px; padding-right: 4px; }
.zoom { width: 60px; height: 20px; }
.files { height: 28px; background: #2d3138; border-bottom: 1px solid #1c2024; flex: none; display: flex; }
.file { width: 112px; background: #1a1d21; color: #c3d3e0; display: flex; align-items: center; padding: 0 7px 0 14px; font-size: 13px; }
.file span { margin-left: 12px; line-height: 28px; padding-top: 3px; }
.file button { margin-left: auto; color: #b0b4b8; }
.file button svg { width: 12px; height: 12px; }

.canvas { flex: 1; position: relative; overflow: hidden; background: #14191f; min-height: 200px; }
.group { position: absolute; background: #592a17; }
.first { left: 0; top: 0; bottom: 0; width: 1220px; border-right: 2px solid #fe5a0c; }
.second { left: 1580px; right: 0; top: 0; height: 179px; border-left: 2px solid #fe5a0c; border-bottom: 2px solid #fe5a0c; }
.gridlines { position: absolute; inset: 0; background: linear-gradient(rgba(140, 150, 190, 0.11) 1px, transparent 1px) 0 6px / 75px 75px, linear-gradient(90deg, rgba(140, 150, 190, 0.11) 1px, transparent 1px) 23px 0 / 75px 75px; }
.wires { position: absolute; left: 0; top: 0; width: 100%; height: 100%; pointer-events: none; }
.node { position: absolute; left: 694px; top: 76px; width: 298px; height: 400px; border: 2px solid #f85b0a; padding: 3px; background: linear-gradient(#2d3138, #2d3138) content-box, #7a3312; }
.head { position: relative; height: 52px; background: #4a6a95; border-bottom: 2px solid #000; padding: 10px 14px; display: flex; flex-direction: column; color: #fff; }
.head b { font-size: 15px; font-weight: 500; line-height: 20px; }
.head small { font-size: 9px; line-height: 14px; color: #ad6a3d; }
.head svg { position: absolute; right: 0; top: 0; width: 70px; height: 50px; }
.port { position: absolute; left: 3px; display: flex; align-items: center; gap: 5px; color: #c3d3e0; }
.port i { width: 8px; height: 15px; background: #4a9df2; border-radius: 0 4px 4px 0; }
.prim { top: 71px; }
.zfx { top: 169px; }
.zfx i { background: #3f6c9f; border: 2px solid #4a9df2; border-left: 0; }
.node textarea { position: absolute; left: 87px; top: 92px; width: 192px; height: 220px; resize: none; background: #1a1d21; padding: 3px; font-size: 10px; line-height: 16px; }

.timeline { background: #24262e; }
.player { height: 39px; background: #2d3138; display: flex; align-items: center; justify-content: center; color: #6c737d; padding-bottom: 1px; }
.cur { width: 38px; height: 20px; background: #1a1d21; border: 1px solid #24272b; margin-right: 15px; }
.step { width: 16px; height: 20px; margin-right: 22px; }
.play { width: 26px; height: 26px; border-radius: 50%; background: #4d545f; margin: 0 15px 0 -6px; }
.play svg { width: 26px; height: 26px; }
.fps { width: 96px; height: 20px; margin-left: -6px; }
.fps select { background: #24262e; }
.range { height: 44px; display: flex; align-items: flex-start; padding: 8px 12px; }
.num { width: 55px; height: 27px; background: #1a1d21; border: 1px solid #15181b; padding: 2px 2px 0; color: #d8dde4; flex: none; }
.slide { flex: 1; display: flex; flex-direction: column; margin: 0 28px 0 26px; }
.slide label { color: #4a9df2; height: 16px; line-height: 14px; }
.slide input { appearance: none; height: 12px; width: 100%; background: linear-gradient(#58646e, #58646e) bottom / 100% 1px no-repeat; padding: 0; }
.slide input::-webkit-slider-thumb { appearance: none; width: 6px; height: 12px; background: #4a9df2; border-radius: 0; }
.statusbar { height: 22px; border-top: 1px solid #000; background: #2d3138; }

.taskbar { position: relative; height: 40px; display: flex; align-items: stretch; background: linear-gradient(90deg, #20291c 0, #283421 14%, #22301e 30%, #26351f 46%, #2b3a27 53%, #1e3420 58%, #2e3827 66%, #293525 73%, #222c25 78%, #202522 88%, #1d221d 100%); overflow: hidden; }
.sys { width: 48px; }
.sys svg { width: 22px; height: 22px; }
.apps { display: flex; margin-left: 2px; }
.apps button { width: 49px; position: relative; }
.apps svg { width: 24px; height: 24px; }
.apps .open::after, .apps .multi::after { content: ""; position: absolute; left: 5px; right: 4px; bottom: 0; height: 2px; background: #76b9ed; }
.apps .multi::after { background: linear-gradient(90deg, #76b9ed 32px, #5685a9 32px); }
.epic { position: absolute; display: flex; flex-direction: column; align-items: center; color: #fff; font: 700 8px/8px "Liberation Sans", sans-serif; padding-bottom: 3px; }
.epic small { font-size: 5px; line-height: 5px; }
.tray { margin-left: auto; display: flex; align-items: center; gap: 7px; padding-right: 24px; color: #fff; }
.tray svg { width: 16px; height: 16px; }
.tray .kbd { width: 24px; margin-left: 4px; }
.ime { font-size: 15px; }
.clock { display: flex; flex-direction: column; align-items: center; width: 68px; line-height: 19px; }
.tray .notice { margin-left: 8px; }
.watermark { position: absolute; right: 16px; top: 8px; font: 19px/24px "Open Sans", sans-serif; color: rgba(225, 225, 225, 0.65); white-space: nowrap; }
</style>
